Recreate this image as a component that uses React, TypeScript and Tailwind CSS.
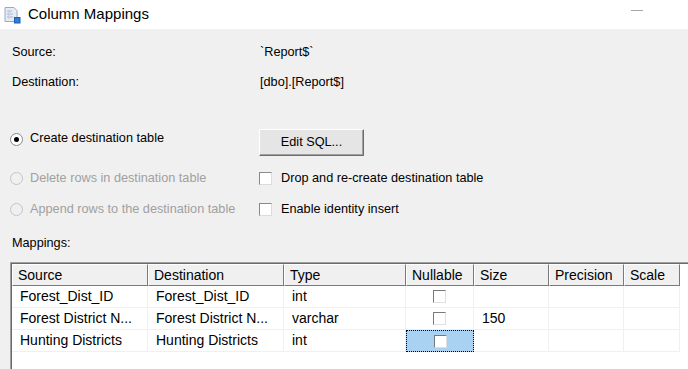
import React from 'react'

const font = { fontFamily: '"Liberation Sans", Arial, sans-serif' }

const columns = [
  { key: 'source', label: 'Source', width: 'w-[136px]' },
  { key: 'dest', label: 'Destination', width: 'w-[136px]' },
  { key: 'type', label: 'Type', width: 'w-[122px]' },
  { key: 'nullable', label: 'Nullable', width: 'w-[68px]' },
  { key: 'size', label: 'Size', width: 'w-[75px]' },
  { key: 'precision', label: 'Precision', width: 'w-[75px]' },
  { key: 'scale', label: 'Scale', width: 'w-[56px]' },
]

const rows = [
  { source: 'Forest_Dist_ID', dest: 'Forest_Dist_ID', type: 'int', size: '' },
  { source: 'Forest District N...', dest: 'Forest District N...', type: 'varchar', size: '150' },
  { source: 'Hunting Districts', dest: 'Hunting Districts', type: 'int', size: '', selected: true },
]

const TitleIcon = () => (
  <svg width="18" height="18" viewBox="0 0 18 18">
    <path d="M2 1.5h9l3 3v11H2z" fill="#e6ecf5" stroke="#9aa8c0" strokeWidth="1" />
    <path d="M4 5h5M4 8h2M7 8h3M4 11h2M7 11h3" stroke="#a9b6cc" strokeWidth="1" />
    <path d="M6 5v8" stroke="#b8c4d8" strokeWidth="1" />
    <rect x="11.5" y="11.5" width="5.5" height="5.5" fill="#2f7fd8" stroke="#1b5fb0" strokeWidth="1" />
  </svg>
)

const Radio = ({ checked, disabled }: { checked?: boolean; disabled?: boolean }) => (
  <span
    className={`relative inline-block w-[13px] h-[13px] rounded-full border ${
      disabled ? 'border-[#c4c4c4] bg-[#f0f0f0]' : 'border-[#8a8a8a] bg-white'
    }`}
  >
    {checked && <span className="absolute left-[3px] top-[3px] w-[5px] h-[5px] rounded-full bg-black" />}
  </span>
)

const Check = () => (
  <span className="inline-block w-[13px] h-[13px] bg-white border border-t-[#8a8a8a] border-l-[#8a8a8a] border-r-[#dcdcdc] border-b-[#dcdcdc]" />
)

const GridCheck = () => (
  <span className="inline-block w-[13px] h-[13px] bg-white border border-t-[#7a7a7a] border-l-[#7a7a7a] border-r-[#e0e0e0] border-b-[#e0e0e0]" />
)

export default function App() {
  return (
    <div className="w-[688px] h-[369px] overflow-hidden flex flex-col bg-[#f0f0f0] text-black" style={font}>
      <div className="h-[29px] bg-white flex items-center shrink-0">
        <div className="ml-[3px] mt-[1px]">
          <TitleIcon />
        </div>
        <span className="ml-[7px] text-[15px] text-[#000]">Column Mappings</span>
        <div className="flex-1" />
        <div className="w-[12px] h-px bg-[#a6a6a6] mr-[45px] mb-[9px]" />
      </div>

      <div className="flex-1 flex flex-col pt-[14px] pl-[10px] text-[12.7px]">
        <div className="h-[20px] flex items-center">
          <span className="w-[250px] pl-[2px]">Source:</span>
          <span>`Report$`</span>
        </div>
        <div className="h-[20px] flex items-center mt-[10px]">
          <span className="w-[250px] pl-[2px]">Destination:</span>
          <span>[dbo].[Report$]</span>
        </div>

        <div className="flex mt-[36px] h-[27px]">
          <div className="w-[249px] h-[20px] flex items-center gap-[7px]">
            <Radio checked />
            <span>Create destination table</span>
          </div>
          <button className="w-[105px] h-[27px] bg-[#e5e5e5] border border-t-white border-l-white border-r-[#6d6d6d] border-b-[#6d6d6d] shadow-[inset_-1px_-1px_0_#a0a0a0] text-[12.7px]">
            Edit SQL...
          </button>
        </div>

        <div className="flex mt-[13px] h-[20px] items-center">
          <div className="w-[249px] flex items-center gap-[7px] text-[#a0a0a0]">
            <Radio disabled />
            <span>Delete rows in destination table</span>
          </div>
          <div className="flex items-center gap-[9px]">
            <Check />
            <span>Drop and re-create destination table</span>
          </div>
        </div>

        <div className="flex mt-[11px] h-[20px] items-center">
          <div className="w-[249px] flex items-center gap-[7px] text-[#a0a0a0]">
            <Radio disabled />
            <span>Append rows to the destination table</span>
          </div>
          <div className="flex items-center gap-[9px]">
            <Check />
            <span>Enable identity insert</span>
          </div>
        </div>

        <div className="h-[20px] flex items-center mt-[14px] pl-[2px]">Mappings:</div>

        <div className="mt-[8px] flex-1 border-t border-l border-[#a0a0a0]">
          <div className="h-full bg-white border-t border-l border-[#696969] text-[14px]">
            <div className="flex h-[22px]">
              {columns.map((c) => (
                <div
                  key={c.key}
                  className={`${c.width} h-[22px] bg-[#f0f0f0] border border-t-white border-l-white border-r-[#7a7a7a] border-b-[#7a7a7a] pl-[5px] flex items-center`}
                >
                  {c.label}
                </div>
              ))}
            </div>
            {rows.map((r, i) => (
              <div key={i} className="flex h-[22px]">
                {columns.map((c) => {
                  const sel = r.selected && c.key === 'nullable'
                  return (
                    <div
                      key={c.key}
                      className={`${c.width} h-[22px] flex items-center ${
                        sel
                          ? 'bg-[#a9d1f2] border border-dotted border-black justify-center'
                          : 'border-r border-b border-[#f0f0f0]'
                      } ${c.key === 'nullable' ? 'justify-center' : 'pl-[8px]'}`}
                    >
                      {c.key === 'nullable' ? (
                        <GridCheck />
                      ) : (
                        (r as Record<string, unknown>)[c.key] as string
                      )}
                    </div>
                  )
                })}
              </div>
            ))}
          </div>
        </div>
      </div>
    </div>
  )
}
